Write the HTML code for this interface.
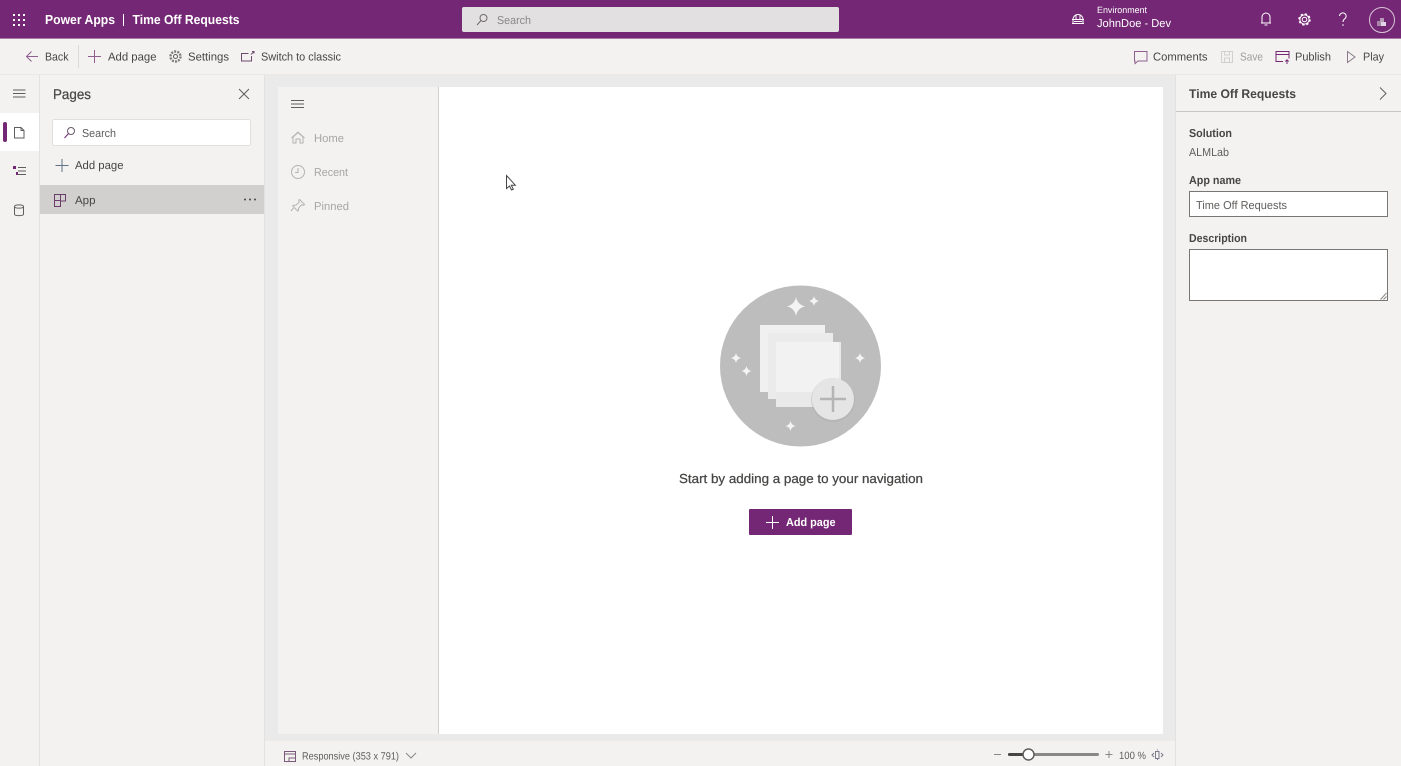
<!DOCTYPE html>
<html lang="en"><head><meta charset="utf-8"><title>Power Apps | Time Off Requests</title>
<style>
html,body{margin:0;padding:0;width:1401px;height:766px;overflow:hidden;background:#f3f2f1}
svg{display:block;font-family:"Liberation Sans",sans-serif;filter:blur(.3px)}
text{font-size:11.5px;fill:#484644}
.b{font-weight:bold}
.s{stroke-width:.25px}
.i{fill:none;stroke:#605e5c;stroke-width:1}
.p{fill:none;stroke:#742774;stroke-width:1}
</style></head><body>
<svg width="1401" height="766" viewBox="0 0 1401 766" xmlns="http://www.w3.org/2000/svg" text-rendering="geometricPrecision">
<rect width="1401" height="766" fill="#f3f2f1"/>
<!-- canvas -->
<rect x="265" y="74" width="911" height="667" fill="#ebeaea"/>
<rect x="0" y="74" width="265" height="692" fill="#f3f2f1"/>
<rect x="0" y="74" width="1401" height="1" fill="#ebe9e7"/>
<rect x="39" y="75" width="1" height="691" fill="#e4e2e0"/>
<rect x="264" y="75" width="1" height="691" fill="#e4e2e0"/>
<rect x="278" y="87" width="161" height="647" fill="#f3f2f1"/>
<rect x="438" y="87" width="1" height="647" fill="#d2d0ce"/>
<rect x="439" y="87" width="724" height="647" fill="#fff"/>
<!-- header -->
<rect width="1401" height="38" fill="#742774"/>
<rect y="38" width="1401" height="1" fill="#a77aa7"/>
<g fill="#fff">
<rect x="13" y="14" width="2" height="2"/><rect x="18" y="14" width="2" height="2"/><rect x="23" y="14" width="2" height="2"/>
<rect x="13" y="19" width="2" height="2"/><rect x="18" y="19" width="2" height="2"/><rect x="23" y="19" width="2" height="2"/>
<rect x="13" y="24" width="2" height="2"/><rect x="18" y="24" width="2" height="2"/><rect x="23" y="24" width="2" height="2"/>
</g>
<text x="45" y="24" class="b" style="font-size:13px;fill:#fff" textLength="70" lengthAdjust="spacingAndGlyphs">Power Apps</text>
<rect x="123" y="14" width="1" height="12" fill="#fff"/>
<text x="132.5" y="24" class="b" style="font-size:13px;fill:#fff" textLength="107" lengthAdjust="spacingAndGlyphs">Time Off Requests</text>
<rect x="462" y="7" width="377" height="25" rx="2" fill="#e3e0e2"/>
<circle cx="483.500" cy="18" r="3.500" fill="none" stroke="#6e6a6e"/><path d="M481 20.500l-4 4.500" stroke="#6e6a6e" fill="none"/>
<text x="497" y="24" style="fill:#8a8886" textLength="34" lengthAdjust="spacingAndGlyphs">Search</text>
<!-- env -->
<g fill="none" stroke="#fff" stroke-width="1">
<path d="M1073 19.500a5 5 0 0 1 10 0M1072 19.500h12M1076 15.500v4M1080 15.500v4M1073 19.500v3.500M1083 19.500v3.500M1072 23.500h12"/>
<path d="M1074 21.500h8"/></g>
<text x="1097" y="13" style="font-size:9px;fill:#fff" textLength="50" lengthAdjust="spacingAndGlyphs">Environment</text>
<text x="1097" y="27" style="font-size:11.500px;fill:#fff" textLength="74" lengthAdjust="spacingAndGlyphs">JohnDoe - Dev</text>
<path d="M1262 23v-6a4 4 0 0 1 8 0v6zM1261 23h10M1264.500 25h3" fill="none" stroke="#fff"/>
<circle cx="1304.500" cy="19.500" r="2.300" fill="none" stroke="#fff" stroke-width="1"/>
<circle cx="1304.500" cy="19.500" r="5.200" fill="none" stroke="#fff" stroke-width="2" stroke-dasharray="2.200 1.900"/>
<circle cx="1304.500" cy="19.500" r="4.600" fill="none" stroke="#fff" stroke-width="1"/>
<path d="M1339.500 16a3.300 3.300 0 1 1 5 3c-1 .8-1.500 1.300-1.500 3" fill="none" stroke="#fff"/><circle cx="1343" cy="25" r=".8" fill="#fff"/>
<circle cx="1382" cy="20" r="12.500" fill="#742774" stroke="#d9c5d9"/>
<rect x="1377" y="21" width="4" height="5" fill="#a888a8"/><rect x="1380" y="18" width="4" height="4" fill="#b79bb7"/><rect x="1381" y="22" width="5" height="4" fill="#e2d6e2"/>
<!-- toolbar -->
<path d="M38 56.500H26.500M31.500 51.500l-5 5 5 5" class="p" style="stroke:#8e5f8e"/>
<text x="45" y="60.500" textLength="23.500" lengthAdjust="spacingAndGlyphs">Back</text>
<rect x="78" y="45" width="1" height="23" fill="#dcdad8"/>
<path d="M94.500 50v13M88 56.500h13" class="p" style="stroke:#8e5f8e"/>
<text x="108" y="60.500" textLength="48.500" lengthAdjust="spacingAndGlyphs">Add page</text>
<circle cx="175.500" cy="56.500" r="2" class="i"/><circle cx="175.500" cy="56.500" r="5" class="i" style="stroke-width:2.400;stroke-dasharray:2 1.150;opacity:.8"/>
<text x="188" y="60.500" textLength="41" lengthAdjust="spacingAndGlyphs">Settings</text>
<path d="M251.500 56v5h-10v-7.500h7M251 54.500l3-3M252 51.500h2v2" fill="none" stroke="#6d4a6d"/>
<text x="261" y="60.500" textLength="80" lengthAdjust="spacingAndGlyphs">Switch to classic</text>
<path d="M1134.500 51.500h12.500v9.500h-9l-3 2.500v-2.500h-.5z" class="p" style="stroke:#8e5f8e"/>
<text x="1153" y="60.500" textLength="54.500" lengthAdjust="spacingAndGlyphs">Comments</text>
<path d="M1221.500 51.500h11v11h-11zM1224.500 51.500v3.500h5v-3.500M1224.500 62.500v-4.500h5v4.500" fill="none" stroke="#d2d0ce"/>
<text x="1240" y="60.500" style="fill:#a19f9d" textLength="23" lengthAdjust="spacingAndGlyphs">Save</text>
<path d="M1283 61.500h-7V51.500h13v7M1276 54.500h13M1287 64v-4M1285.300 61.500l1.700-1.700 1.700 1.700" class="p"/>
<text x="1295" y="60.500" textLength="36" lengthAdjust="spacingAndGlyphs">Publish</text>
<path d="M1347.500 51.500l7.500 5.500-7.500 5.500z" class="p" style="stroke:#8a7a8a"/>
<text x="1363" y="60.500" textLength="21" lengthAdjust="spacingAndGlyphs">Play</text>
<!-- left rail -->
<path d="M13 90h12.500M13 93.500h12.500M13 97h12.500" stroke="#605e5c" fill="none"/>
<rect x="0" y="113" width="39" height="38" fill="#fff"/>
<rect x="3" y="122" width="4" height="20" rx="2" fill="#742774"/>
<path d="M14.500 127.500h6.500l3 3v7.500h-9.500zM21 127.500v3h3" fill="none" stroke="#605e5c"/>
<path d="M18 167.500h8M18 171h8M18 174.500h8" fill="none" stroke="#605e5c"/>
<rect x="13" y="166" width="3" height="3" fill="#742774"/><rect x="16" y="172" width="2" height="3" fill="#742774"/>
<path d="M14.500 206.500v7.500c0 2.200 9 2.200 9 0v-7.500M14.500 206.500c0-2.200 9-2.200 9 0s-9 2.200-9 0z" fill="none" stroke="#605e5c"/>
<!-- pages panel -->
<text x="53" y="99" class="s" style="font-size:14px;stroke:#484644" textLength="38" lengthAdjust="spacingAndGlyphs">Pages</text>
<path d="M239 89l10 10M249 89l-10 10" stroke="#605e5c" fill="none"/>
<rect x="52.500" y="119.500" width="198" height="26" rx="2" fill="#fff" stroke="#e1dfdd"/>
<circle cx="71" cy="131" r="3.500" fill="none" stroke="#6a5a6a"/><path d="M68.500 133.500l-4 4.500" stroke="#742774" fill="none"/>
<text x="82" y="137" style="fill:#605e5c" textLength="34" lengthAdjust="spacingAndGlyphs">Search</text>
<path d="M62 159v13M55.500 165.500h13" stroke="#5f7184" fill="none"/>
<text x="75" y="169" textLength="48.500" lengthAdjust="spacingAndGlyphs">Add page</text>
<rect x="40" y="185" width="224" height="29" fill="#d2d0ce"/>
<path d="M54.500 194.500h11v6.500h-5v5.500h-6zM54.500 200.500h6M60.500 194.500v6" fill="none" stroke="#6c3c6c"/>
<text x="75" y="204" textLength="20.500" lengthAdjust="spacingAndGlyphs">App</text>
<circle cx="245" cy="199.500" r="1" fill="#484644"/><circle cx="250" cy="199.500" r="1" fill="#484644"/><circle cx="255" cy="199.500" r="1" fill="#484644"/>
<!-- nav -->
<path d="M291 100.500h13M291 104h13M291 107.500h13" stroke="#605e5c" fill="none"/>
<path d="M293 143v-6l5-4.500 5 4.500v6h-3v-4h-4v4zM291.500 138l6.500-6 6.500 6" fill="none" stroke="#b5b3b1"/>
<text x="314" y="142" style="fill:#a8a6a4" textLength="30" lengthAdjust="spacingAndGlyphs">Home</text>
<circle cx="298" cy="172" r="6.500" fill="none" stroke="#b5b3b1"/><path d="M298 168v4.500h-3" fill="none" stroke="#b5b3b1"/>
<text x="314" y="176" style="fill:#a8a6a4" textLength="34" lengthAdjust="spacingAndGlyphs">Recent</text>
<path d="M299.500 199.500l5 5-1 .8-2-.5-3 3.500v2.300l-.8.4-5-5 .8-.8h2.300l3.400-3-.5-2zM293.500 208l-2.500 3" fill="none" stroke="#b5b3b1"/>
<text x="314" y="210" style="fill:#a8a6a4" textLength="35" lengthAdjust="spacingAndGlyphs">Pinned</text>
<!-- cursor -->
<path d="M506.500 175.500v13l3-2.500 2 4 1.800-.8-2-4h4z" fill="#fff" stroke="#444"/>
<!-- illustration -->
<circle cx="800.500" cy="366" r="80.500" fill="#bdbdbd"/>
<rect x="760" y="325" width="65" height="67" fill="#f0f0f0"/>
<rect x="768" y="333" width="65" height="66" fill="#ebebeb"/>
<rect x="776" y="342" width="65" height="65" fill="#e9e9e9"/>
<rect x="776" y="342" width="63" height="50" fill="#f2f2f2"/>
<circle cx="833" cy="400" r="22" fill="#aaa" fill-opacity=".4"/>
<circle cx="833" cy="399" r="21" fill="#e6e5e5"/>
<path d="M833 386v26M820 399h26" stroke="#b4b4b4" stroke-width="2.500" fill="none"/>
<g fill="#f4f4f4">
<path d="M796 297q1.500 7.500 9 9.500q-7.500 1.500-9 9.500q-1.500-8-9-9.500q7.500-2 9-9.500z"/>
<path d="M814 296q.8 4 5 5q-4.200 1-5 5q-.8-4-5-5q4.200-1 5-5z"/>
<path d="M736 353q.8 4 5 5q-4.200 1-5 5q-.8-4-5-5q4.200-1 5-5z"/>
<path d="M746.500 366q.8 4 5 5q-4.200 1-5 5q-.8-4-5-5q4.200-1 5-5z"/>
<path d="M860 353q.8 4 5 5q-4.200 1-5 5q-.8-4-5-5q4.200-1 5-5z"/>
<path d="M790.500 421q.8 4 5 5q-4.200 1-5 5q-.8-4-5-5q4.200-1 5-5z"/>
</g>
<text x="679" y="483" class="s" style="font-size:13px;stroke:#484644" textLength="244" lengthAdjust="spacingAndGlyphs">Start by adding a page to your navigation</text>
<rect x="749" y="509" width="103" height="26" rx="1" fill="#742774"/>
<path d="M772.500 516v13M766 522.500h13" stroke="#fff" fill="none"/>
<text x="786" y="526" class="b" style="font-size:11.500px;fill:#fff" textLength="49.500" lengthAdjust="spacingAndGlyphs">Add page</text>
<!-- right panel -->
<rect x="1176" y="75" width="225" height="691" fill="#f3f2f1"/>
<rect x="1175" y="75" width="1" height="691" fill="#e4e2e0"/>
<rect x="1176" y="111" width="225" height="1" fill="#c8c6c4"/>
<text x="1189" y="98" class="b" style="font-size:12.500px" textLength="107" lengthAdjust="spacingAndGlyphs">Time Off Requests</text>
<path d="M1380 87.500l6 6-6 6" fill="none" stroke="#605e5c"/>
<text x="1189" y="137" class="b" textLength="43" lengthAdjust="spacingAndGlyphs">Solution</text>
<text x="1189" y="156" style="fill:#605e5c" textLength="40" lengthAdjust="spacingAndGlyphs">ALMLab</text>
<text x="1189" y="184" class="b" textLength="52" lengthAdjust="spacingAndGlyphs">App name</text>
<rect x="1189.500" y="191.500" width="198" height="25" fill="#fff" stroke="#797775"/>
<text x="1196" y="209" style="fill:#605e5c" textLength="91" lengthAdjust="spacingAndGlyphs">Time Off Requests</text>
<text x="1189" y="242" class="b" textLength="58" lengthAdjust="spacingAndGlyphs">Description</text>
<rect x="1189.500" y="249.500" width="198" height="51" fill="#fff" stroke="#797775"/>
<path d="M1386.500 293l-6 6.500M1386.500 296.500l-3 3" stroke="#8a8886" fill="none"/>
<!-- bottom bar -->
<rect x="265" y="741" width="910" height="25" fill="#f3f2f1"/>
<path d="M284.500 751.500h11v10h-11zM284.500 754h11M289 758h6.500v3.500H289z" fill="none" stroke="#7a5a7a"/>
<text x="302" y="759.500" style="font-size:10.500px;fill:#605e5c" textLength="97" lengthAdjust="spacingAndGlyphs">Responsive (353 x 791)</text>
<path d="M406 753l5 5 5-5" fill="none" stroke="#8a8886"/>
<rect x="994" y="754" width="7" height="1" fill="#8a8886"/>
<rect x="1008" y="753" width="91" height="3" rx="1.500" fill="#8a8886"/>
<rect x="1008" y="753" width="20" height="3" rx="1.500" fill="#484644"/>
<circle cx="1028.500" cy="754.500" r="5.500" fill="#fff" stroke="#605e5c" stroke-width="1.500"/>
<path d="M1109 751v7M1105.500 754.500h7" stroke="#8a8886" fill="none"/>
<text x="1119" y="759" style="font-size:10.500px;fill:#605e5c" textLength="27" lengthAdjust="spacingAndGlyphs">100 %</text>
<path d="M1155.500 751.500h3.500v7h-3.500zM1157.500 749.500v1M1157.500 759v1M1154 753l-2 2 2 2M1161 753l2 2-2 2" fill="none" stroke="#7a7a8a"/>
</svg>
</body></html>
